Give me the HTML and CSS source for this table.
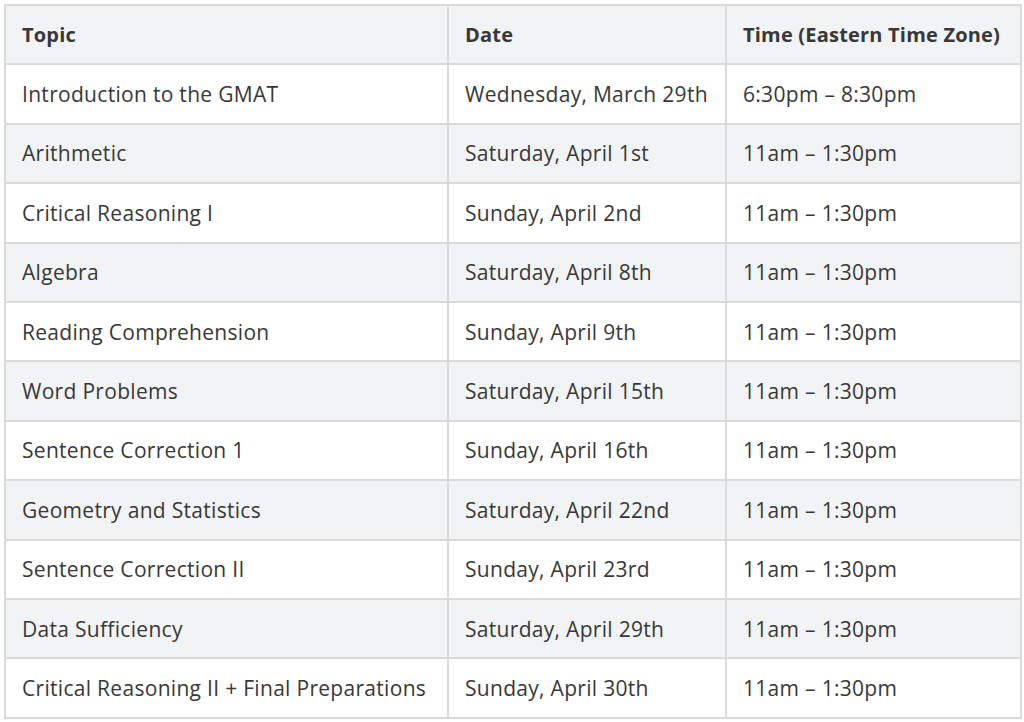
FILE: index.html
```html
<!DOCTYPE html>
<html>
<head>
<meta charset="utf-8">
<link rel="stylesheet" href="styles.css">
</head>
<body>
<div class="wrap">
<table class="schedule">
  <colgroup>
    <col class="c1"><col class="c2"><col class="c3">
  </colgroup>
  <thead>
    <tr><th>Topic</th><th>Date</th><th>Time (Eastern Time Zone)</th></tr>
  </thead>
  <tbody>
    <tr><td>Introduction to the GMAT</td><td>Wednesday, March 29th</td><td>6:30pm – 8:30pm</td></tr>
    <tr><td>Arithmetic</td><td>Saturday, April 1st</td><td>11am – 1:30pm</td></tr>
    <tr><td>Critical Reasoning I</td><td>Sunday, April 2nd</td><td>11am – 1:30pm</td></tr>
    <tr><td>Algebra</td><td>Saturday, April 8th</td><td>11am – 1:30pm</td></tr>
    <tr><td>Reading Comprehension</td><td>Sunday, April 9th</td><td>11am – 1:30pm</td></tr>
    <tr><td>Word Problems</td><td>Saturday, April 15th</td><td>11am – 1:30pm</td></tr>
    <tr><td>Sentence Correction 1</td><td>Sunday, April 16th</td><td>11am – 1:30pm</td></tr>
    <tr><td>Geometry and Statistics</td><td>Saturday, April 22nd</td><td>11am – 1:30pm</td></tr>
    <tr><td>Sentence Correction II</td><td>Sunday, April 23rd</td><td>11am – 1:30pm</td></tr>
    <tr><td>Data Sufficiency</td><td>Saturday, April 29th</td><td>11am – 1:30pm</td></tr>
    <tr><td>Critical Reasoning II + Final Preparations</td><td>Sunday, April 30th</td><td>11am – 1:30pm</td></tr>
  </tbody>
</table>
</div>
</body>
</html>
```
FILE: styles.css
```css
html, body {
  margin: 0;
  padding: 0;
  background: #ffffff;
}
.wrap {
  padding: 4px 0 0 4px;
}
.schedule {
  border-collapse: collapse;
  table-layout: fixed;
  width: 1016px;
  font-family: "Open Sans", "Liberation Sans", sans-serif;
  color: #383838;
}
.c1 { width: 443px; }
.c2 { width: 278px; }
.c3 { width: 295px; }
.schedule th,
.schedule td {
  border: 2px solid #d9dadc;
  height: 59.4px;
  box-sizing: border-box;
  padding: 0 0 0 16px;
  text-align: left;
  vertical-align: middle;
  white-space: nowrap;
}
.schedule th {
  font-size: 20px;
  font-weight: 700;
  letter-spacing: 0.2px;
  background: #f2f3f5;
}
.schedule td {
  font-size: 21px;
  font-weight: 400;
  letter-spacing: 0.3px;
}
.schedule tbody tr:nth-child(even) td {
  background: #f2f3f5;
}
```
